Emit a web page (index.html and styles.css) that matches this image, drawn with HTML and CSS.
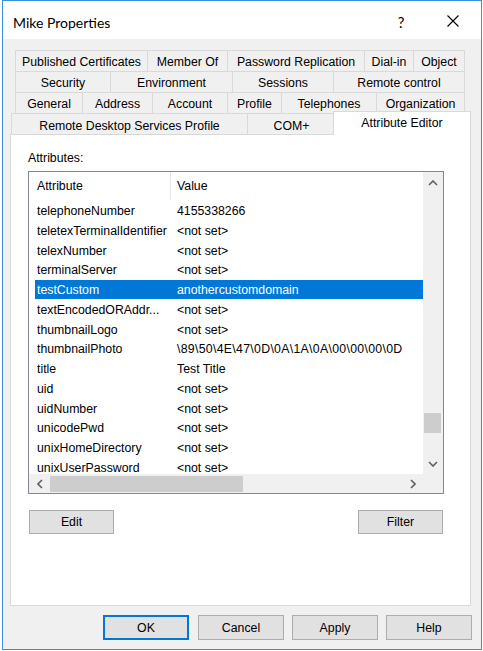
FILE: index.html
```html
<!DOCTYPE html>
<html>
<head>
<meta charset="utf-8">
<link rel="stylesheet" href="styles.css">
</head>
<body>
<div class="window">
  <div class="titlebar">
    <span class="title">Mike Properties</span>
    <span class="help">?</span>
    <span class="close"><svg width="12" height="12" viewBox="0 0 12 12"><path d="M0.5 0.5L11.5 11.5M11.5 0.5L0.5 11.5" stroke="#000" stroke-width="1.1" fill="none"/></svg></span>
  </div>
  <div class="body">
    <div class="tabs">
      <div class="tabrow row1">
        <div class="tab">Published Certificates</div>
        <div class="tab">Member Of</div>
        <div class="tab">Password Replication</div>
        <div class="tab">Dial-in</div>
        <div class="tab">Object</div>
      </div>
      <div class="tabrow row2">
        <div class="tab">Security</div>
        <div class="tab">Environment</div>
        <div class="tab">Sessions</div>
        <div class="tab">Remote control</div>
      </div>
      <div class="tabrow row3">
        <div class="tab">General</div>
        <div class="tab">Address</div>
        <div class="tab">Account</div>
        <div class="tab">Profile</div>
        <div class="tab">Telephones</div>
        <div class="tab">Organization</div>
      </div>
      <div class="tabrow row4">
        <div class="tab">Remote Desktop Services Profile</div>
        <div class="tab">COM+</div>
        <div class="tab active">Attribute Editor</div>
      </div>
    </div>
    <div class="panel">
      <div class="label">Attributes:</div>
      <div class="listbox">
        <div class="lv-main">
          <div class="lv-header">
            <div class="h1">Attribute</div>
            <div class="h2">Value</div>
          </div>
          <div class="lv-row"><div class="c1">telephoneNumber</div><div class="c2">4155338266</div></div>
          <div class="lv-row"><div class="c1">teletexTerminalIdentifier</div><div class="c2">&lt;not set&gt;</div></div>
          <div class="lv-row"><div class="c1">telexNumber</div><div class="c2">&lt;not set&gt;</div></div>
          <div class="lv-row"><div class="c1">terminalServer</div><div class="c2">&lt;not set&gt;</div></div>
          <div class="lv-row sel"><div class="c1">testCustom</div><div class="c2">anothercustomdomain</div></div>
          <div class="lv-row"><div class="c1">textEncodedORAddr...</div><div class="c2">&lt;not set&gt;</div></div>
          <div class="lv-row"><div class="c1">thumbnailLogo</div><div class="c2">&lt;not set&gt;</div></div>
          <div class="lv-row"><div class="c1">thumbnailPhoto</div><div class="c2 wide">\89\50\4E\47\0D\0A\1A\0A\00\00\00\0D</div></div>
          <div class="lv-row"><div class="c1">title</div><div class="c2">Test Title</div></div>
          <div class="lv-row"><div class="c1">uid</div><div class="c2">&lt;not set&gt;</div></div>
          <div class="lv-row"><div class="c1">uidNumber</div><div class="c2">&lt;not set&gt;</div></div>
          <div class="lv-row"><div class="c1">unicodePwd</div><div class="c2">&lt;not set&gt;</div></div>
          <div class="lv-row"><div class="c1">unixHomeDirectory</div><div class="c2">&lt;not set&gt;</div></div>
          <div class="lv-row"><div class="c1">unixUserPassword</div><div class="c2">&lt;not set&gt;</div></div>
        </div>
        <div class="vscroll">
          <div class="arrow"><svg width="10" height="6" viewBox="0 0 10 6"><path d="M1 5L5 1L9 5" stroke="#606060" stroke-width="1.6" fill="none"/></svg></div>
          <div class="vtrack"><div class="vthumb"></div></div>
          <div class="arrow"><svg width="10" height="6" viewBox="0 0 10 6"><path d="M1 1L5 5L9 1" stroke="#606060" stroke-width="1.6" fill="none"/></svg></div>
        </div>
        <div class="hscroll">
          <div class="harrow"><svg width="6" height="10" viewBox="0 0 6 10"><path d="M5 1L1 5L5 9" stroke="#606060" stroke-width="1.6" fill="none"/></svg></div>
          <div class="htrack"><div class="hthumb"></div></div>
          <div class="harrow"><svg width="6" height="10" viewBox="0 0 6 10"><path d="M1 1L5 5L1 9" stroke="#606060" stroke-width="1.6" fill="none"/></svg></div>
        </div>
        <div class="corner"></div>
      </div>
      <div class="pbtns">
        <button class="btn small">Edit</button>
        <button class="btn small">Filter</button>
      </div>
    </div>
    <div class="dbtns">
      <button class="btn big default">OK</button>
      <button class="btn big">Cancel</button>
      <button class="btn big">Apply</button>
      <button class="btn big">Help</button>
    </div>
  </div>
</div>
</body>
</html>
```
FILE: styles.css
```css
html, body {
  margin: 0;
  background: #fff;
}
body {
  font-family: "Liberation Sans", Arial, sans-serif;
  font-size: 12.3px;
  color: #000;
}
.window {
  margin-left: 2px;
  width: 480px;
  height: 650px;
  box-sizing: border-box;
  border: 1px solid #3a8ee0;
  background: #f0f0f0;
  display: flex;
  flex-direction: column;
}
.titlebar {
  flex: none;
  height: 38px;
  background: #fff;
  display: flex;
  align-items: center;
  padding-right: 8px;
}
.title {
  flex: 1;
  margin-left: 10px;
  font-family: "Lato", "Open Sans", sans-serif;
  font-size: 14px;
  color: #000;
  padding-top: 4px;
}
.help {
  width: 20px;
  text-align: center;
  margin-right: 22px;
  font-family: "Lato", "Open Sans", sans-serif;
  font-size: 15px;
  padding-top: 3px;
}
.close {
  width: 40px;
  height: 20px;
  display: flex;
  align-items: center;
  justify-content: center;
  padding-top: 2px;
}
.body {
  flex: 1;
  padding: 11px 10px 0 7px;
}
.tabs {
  display: flex;
  flex-direction: column;
}
.tabrow {
  display: grid;
  height: 21px;
}
.row1 {
  margin-left: 5px;
  grid-template-columns: 132px 80px 137px 49px 52px;
}
.row2 {
  margin-left: 5px;
  grid-template-columns: 95px 122px 101px 132px;
}
.row3 {
  margin-left: 5px;
  grid-template-columns: 67px 70px 75px 54px 95px 89px;
}
.row4 {
  margin-left: 1px;
  grid-template-columns: 236px 88px 134px;
}
.tab {
  box-sizing: border-box;
  border-top: 1px solid #d9d9d9;
  border-left: 1px solid #d9d9d9;
  background: #f0f0f0;
  text-align: center;
  line-height: 20px;
  padding-top: 1px;
  white-space: nowrap;
  overflow: hidden;
}
.row4 .tab {
  padding-top: 2px;
}
.tab:last-child {
  border-right: 1px solid #d9d9d9;
}
.tab.active {
  position: relative;
  z-index: 1;
  background: #fff;
  margin: -2px -2px -1px -2px;
  padding-top: 1px;
}
.panel {
  box-sizing: border-box;
  height: 472px;
  background: #fff;
  border: 1px solid #d9d9d9;
  padding: 16px 0 0 17px;
}
.label {
  line-height: 14px;
}
.listbox {
  margin-top: 6px;
  width: 416px;
  height: 323px;
  box-sizing: border-box;
  border: 1px solid #828790;
  display: grid;
  grid-template-columns: 1fr 20px;
  grid-template-rows: 1fr 19px;
}
.lv-main {
  overflow: hidden;
  background: #fff;
}
.lv-header {
  height: 28px;
  display: flex;
}
.h1 {
  box-sizing: border-box;
  width: 142px;
  padding-left: 8px;
  line-height: 29px;
  border-right: 1px solid #e5e5e5;
}
.h2 {
  padding-left: 6px;
  line-height: 29px;
}
.lv-row {
  box-sizing: border-box;
  height: 19.75px;
  line-height: 18.75px;
  padding-top: 1.5px;
  margin-left: 6px;
  display: flex;
  white-space: nowrap;
}
.lv-header + .lv-row {
  margin-top: 0.5px;
}
.c1 {
  flex: none;
  box-sizing: border-box;
  width: 135px;
  padding-left: 2px;
  overflow: hidden;
}
.c2 {
  flex: 1;
  min-width: 0;
  padding-left: 7px;
  overflow: hidden;
}
.c2.wide {
  letter-spacing: 0.3px;
}
.lv-row.sel {
  background: #0078d7;
  color: #fff;
}
.vscroll {
  background: #f0f0f0;
  display: flex;
  flex-direction: column;
}
.arrow {
  flex: none;
  height: 21px;
  display: flex;
  align-items: center;
  justify-content: center;
}
.vtrack {
  flex: 1;
}
.vthumb {
  margin: 220px 0 0 1px;
  width: 17px;
  height: 20px;
  background: #cdcdcd;
}
.hscroll {
  background: #f0f0f0;
  display: flex;
}
.harrow {
  flex: none;
  width: 21px;
  display: flex;
  align-items: center;
  justify-content: center;
}
.htrack {
  flex: 1;
}
.hthumb {
  margin-top: 2px;
  width: 193px;
  height: 16px;
  background: #cdcdcd;
}
.corner {
  background: #f0f0f0;
}
.pbtns {
  display: flex;
  justify-content: space-between;
  width: 414px;
  margin: 16px 0 0 1px;
}
.btn {
  box-sizing: border-box;
  padding: 0;
  margin: 0;
  background: #e1e1e1;
  border: 1px solid #adadad;
  font-family: inherit;
  font-size: inherit;
  color: #000;
  text-align: center;
}
.btn.small {
  width: 85px;
  height: 24px;
}
.dbtns {
  display: flex;
  justify-content: flex-end;
  gap: 8px;
  margin: 9px -1px 0 0;
}
.btn.big {
  width: 86px;
  height: 25px;
}
.btn.default {
  border: 2px solid #0078d7;
  margin-right: 1px;
}
```
